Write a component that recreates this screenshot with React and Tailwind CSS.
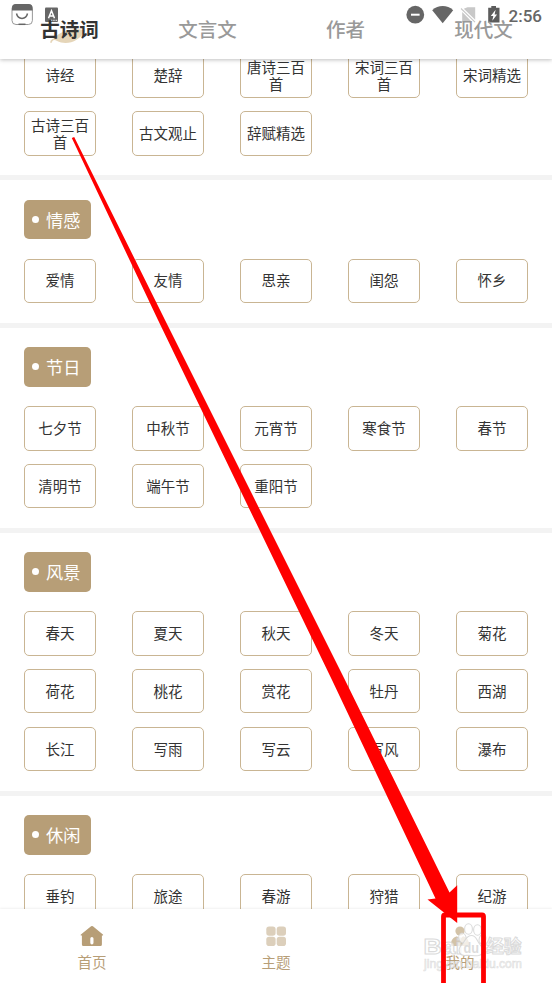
const TABS = ['古诗词', '文言文', '作者', '现代文']

const BOOKS = ['诗经', '楚辞', '唐诗三百首', '宋词三百首', '宋词精选', '古诗三百首', '古文观止', '辞赋精选']

const SECTIONS = [
  { title: '情感', items: ['爱情', '友情', '思亲', '闺怨', '怀乡'] },
  { title: '节日', items: ['七夕节', '中秋节', '元宵节', '寒食节', '春节', '清明节', '端午节', '重阳节'] },
  {
    title: '风景',
    items: [
      '春天', '夏天', '秋天', '冬天', '菊花',
      '荷花', '桃花', '赏花', '牡丹', '西湖',
      '长江', '写雨', '写云', '写风', '瀑布',
    ],
  },
  { title: '休闲', items: ['垂钓', '旅途', '春游', '狩猎', '纪游'] },
]

function TagGrid({ items }) {
  return (
    <div className="grid grid-cols-[repeat(5,72px)] gap-x-9 gap-y-[13.4px]">
      {items.map((t) => (
        <div
          key={t}
          className="flex h-[44.4px] items-center justify-center rounded-[5px] border border-[#c9b593] px-1 pb-[2px] text-center text-[14.5px] leading-[17px] text-[#333]"
        >
          {t}
        </div>
      ))}
    </div>
  )
}

function Section({ title, items }) {
  return (
    <section className="border-t-5 border-[#f3f3f3] px-6 pt-[19.5px] pb-[19.5px]">
      <div className="mb-[19.6px] flex h-[39.4px] w-[67px] items-center rounded-[5px] bg-[#b79e77] pl-2 text-[17.2px] text-white">
        <i className="mr-[7px] size-[7px] rounded-full bg-white" />
        {title}
      </div>
      <TagGrid items={items} />
    </section>
  )
}

function StatusIcons() {
  return (
    <svg className="absolute inset-0" width="552" height="59" viewBox="0 0 552 59">
      {/* bag */}
      <rect x="12" y="4.5" width="20.4" height="20" rx="4" fill="#fff" stroke="#8c8c8c" strokeWidth="0.9" />
      <path d="M12 10.5V8a4 4 0 0 1 4-4h12.5a4 4 0 0 1 4 4v2.5z" fill="#666" />
      <path d="M16.5 13.500c1.5 6.500 9.500 6.500 11 0" fill="none" stroke="#666" strokeWidth="1.5" />
      <path d="M18.5 24.3h7" stroke="#666" strokeWidth="1.5" />
      {/* input method */}
      <rect x="45" y="7.5" width="13" height="14.5" rx="1" fill="#666" />
      <path d="M48.500 18.300 51.500 10.700 54.500 18.300M49.600 16h3.800" fill="none" stroke="#fff" strokeWidth="1.5" />
      <path d="M51 20.3h7" stroke="#fff" strokeWidth="1" strokeDasharray="1.3 1" />
      {/* do not disturb */}
      <circle cx="415.3" cy="14.7" r="8.9" fill="#666" />
      <path d="M411 14.7h8.6" stroke="#fff" strokeWidth="2" />
      {/* wifi */}
      <path d="M432.2 10.3c6-5.600 15-5.600 21 0L442.7 23.2z" fill="#666" />
      {/* no sim */}
      <path d="M467.500 7.300h7.700v12.500L463.800 8.700zM462.200 12l9.800 10h-9.800z" fill="#c8c8c8" />
      <path d="m461 8.500 14 13.700" stroke="#c8c8c8" strokeWidth="1.1" />
      {/* battery */}
      <path d="M491.3 6h4.700v1.700h3.500v14.800h-11.300V7.700h3.100z" fill="#5c5c5c" />
      <path d="M495.600 9.800 490.800 16h2.500l-1 4.700 4.800-6.200h-2.500z" fill="#fff" />
    </svg>
  )
}

function HomeIcon() {
  return (
    <svg width="24" height="24" viewBox="0 0 24 24" fill="#b79e77">
      <path
        fillRule="evenodd"
        d="M11.100 2.300a1.400 1.400 0 0 1 1.800 0l10 8.200c.5.500.2 1-.3 1h-.7v9a1.500 1.500 0 0 1-1.500 1.500h-17a1.500 1.500 0 0 1-1.500-1.500v-9h-.7c-.5 0-.8-.5-.3-1zM10.300 14.500v4.300a1.600 1.600 0 0 0 3.200 0v-4.300a1.600 1.600 0 0 0-3.200 0z"
      />
    </svg>
  )
}

function ThemeIcon() {
  return (
    <svg width="24" height="24" viewBox="0 0 24 24" fill="#dccfbb">
      <rect x="2.3" y="2.5" width="9.3" height="9.3" rx="2.8" />
      <rect x="12.7" y="2.5" width="9.3" height="9.3" rx="2.8" />
      <rect x="2.3" y="12.8" width="9.3" height="9.3" rx="2.8" />
      <rect x="12.7" y="12.8" width="9.3" height="9.3" rx="2.8" />
    </svg>
  )
}

function UserIcon() {
  return (
    <svg width="24" height="24" viewBox="0 0 24 24" fill="#d3c3a8">
      <circle cx="12" cy="7" r="4.6" />
      <path d="M3 20.500c0-5 2.500-7.300 6-8.300l3 3 3-3c3.500 1 6 3.300 6 8.300 0 1-.7 1.500-1.500 1.500h-15c-.8 0-1.500-.5-1.500-1.500z" />
    </svg>
  )
}

const NAV = [
  { label: '首页', Icon: HomeIcon },
  { label: '主题', Icon: ThemeIcon },
  { label: '我的', Icon: UserIcon },
]

function Watermark() {
  return (
    <svg
      className="absolute inset-0"
      width="552"
      height="983"
      viewBox="0 0 552 983"
      fontFamily="'Liberation Sans', 'Noto Sans CJK SC', sans-serif"
    >
      <g fill="#fff" fillOpacity="0.7" stroke="#d2d2d2" strokeOpacity="0.8" strokeWidth="1.1">
        <text x="423.5" y="953.5" fontSize="22" fontWeight="bold" textLength="39" lengthAdjust="spacingAndGlyphs">Bai</text>
        <ellipse cx="462.5" cy="938" rx="3.700" ry="5" transform="rotate(-15 462.500 938)" />
        <ellipse cx="468.5" cy="929" rx="3.900" ry="5.300" />
        <ellipse cx="477.500" cy="930" rx="3.900" ry="5.300" />
        <ellipse cx="482.500" cy="939" rx="3.300" ry="4.800" transform="rotate(15 482.500 939)" />
        <path d="M471.500 935.500c5 0 5 5 8.500 9s4.500 10-1.500 11c-5 .7-9-.5-14 0-6-.5-7-6-3-10.500 4-4 4.500-9.500 10-9.500z" />
        <text x="486" y="953" fontSize="18" fontWeight="bold" textLength="35.500" lengthAdjust="spacingAndGlyphs">经验</text>
      </g>
      <text x="463.5" y="952.5" fontSize="15" fontWeight="bold" fill="#dcdcdc" textLength="15.500" lengthAdjust="spacingAndGlyphs">du</text>
      <text
        x="424"
        y="967.5"
        fontSize="12.5"
        fill="#fff"
        fillOpacity="0.6"
        stroke="#d0d0d0"
        strokeOpacity="0.7"
        strokeWidth="0.7"
        textLength="98"
        lengthAdjust="spacingAndGlyphs"
      >
        jingyan.baidu.com
      </text>
    </svg>
  )
}

function Annotation() {
  return (
    <svg className="absolute inset-0" width="552" height="983" viewBox="0 0 552 983">
      <path d="M71.800 138 74.200 137 165 320 345 680 449.500 892.500 457.200 885.200V923L427.500 899.500 435.500 898.500 332 680 158 320z" fill="#f00" />
      <path d="M443.500 990V916.500a1.500 1.500 0 0 1 1.500-1.500h37a1.500 1.500 0 0 1 1.500 1.500V990" fill="none" stroke="#f00" strokeWidth="4.800" />
    </svg>
  )
}

export default function App() {
  return (
    <div className="relative flex h-[983px] w-[552px] flex-col overflow-hidden bg-white font-['Noto_Sans_CJK_SC',sans-serif]">
      <header className="relative z-10 h-[59px] shrink-0 bg-white shadow-[0_1px_4px_rgba(0,0,0,0.25)]">
        <StatusIcons />
        <span className="absolute top-[6px] left-[508.5px] font-[Roboto,sans-serif] text-[17px] leading-[21px] font-medium text-[#666]">
          2:56
        </span>
        <svg className="absolute top-[28px] left-[49px]" width="38" height="17" viewBox="0 0 38 17">
          <path d="M1.300 14.800C1 12 3 11.300 5.500 10 11 3 24-1 36 2.500c-5 10-15 14-24 12-3-1-5-2.500-7-2.500-1.500.5-2 1.500-2.500 3z" fill="#e5d5b8" />
        </svg>
        <nav className="relative grid h-full grid-cols-4">
          {TABS.map((t, i) => (
            <div
              key={t}
              className={`flex h-[57px] items-center justify-center pl-px text-[19.5px] ${i === 0 ? 'font-bold text-[#333]' : 'font-medium text-[#999]'}`}
            >
              {t}
            </div>
          ))}
        </nav>
      </header>

      <main className="h-[850px] shrink-0 overflow-hidden">
        <div className="-mt-[5.3px] px-6 pb-[19.4px]">
          <TagGrid items={BOOKS} />
        </div>
        {SECTIONS.map((s) => (
          <Section key={s.title} {...s} />
        ))}
      </main>

      <footer className="relative z-10 grid h-[74px] shrink-0 grid-cols-3 bg-white shadow-[0_-1px_2px_rgba(0,0,0,0.06)]">
        {NAV.map(({ label, Icon }) => (
          <div key={label} className="flex flex-col items-center pt-[15px] text-[14.5px] leading-[20px] text-[#b79e77]">
            <Icon />
            <span className="mt-[4px]">{label}</span>
          </div>
        ))}
      </footer>

      <div className="pointer-events-none absolute inset-0 z-20">
        <Watermark />
        <Annotation />
      </div>
    </div>
  )
}
